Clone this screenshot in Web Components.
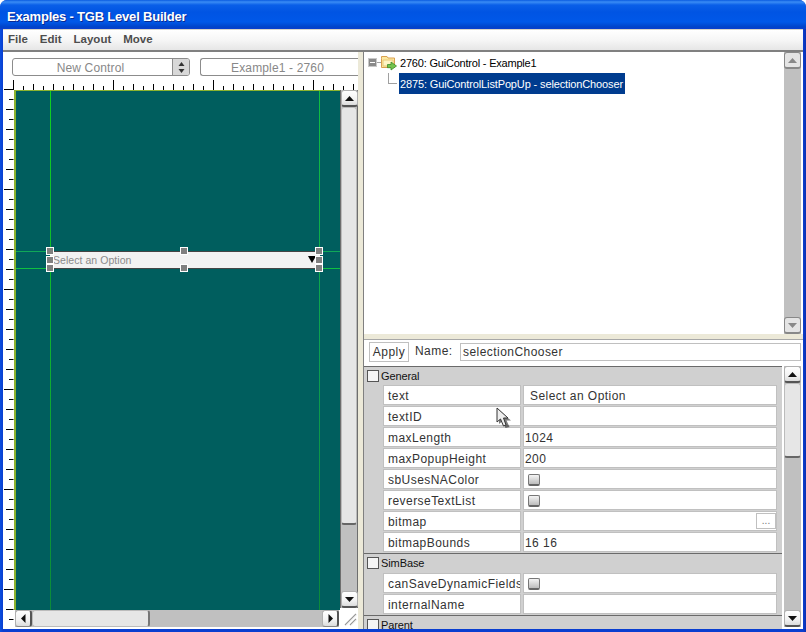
<!DOCTYPE html>
<html>
<head>
<meta charset="utf-8">
<title>Examples - TGB Level Builder</title>
<style>
  html, body { margin: 0; padding: 0; background: #fff; }
  body { font-family: "Liberation Sans", Arial, sans-serif; }
</style>
</head>
<body>
<level-builder>
  <title-bar slot="title">Examples - TGB Level Builder</title-bar>
  <menu-bar slot="menu"></menu-bar>
  <design-pane slot="left"></design-pane>
  <tree-pane slot="tree"></tree-pane>
  <props-pane slot="props"></props-pane>
</level-builder>

<script>
function define(name, html, setup) {
  const template = document.createElement('template')
  template.innerHTML = html
  customElements.define(name, class extends HTMLElement {
    constructor() {
      super()
      this.attachShadow({mode: 'open'}).appendChild(template.content.cloneNode(true))
      if (setup) setup(this.shadowRoot, this)
    }
  })
}

define('level-builder', `
<style>
  :host { display: flex; flex-direction: column; width: 806px; height: 632px; position: relative; overflow: hidden;
    border-radius: 7px 7px 0 0; background: linear-gradient(90deg, #0a4fe0, #0a3ed0 3px, #0a3ed0 803px, #0a2fb0); }
  .frame { flex: 1; min-height: 0; display: flex; flex-direction: column; margin: 0 3px 3px 3px; background: #ece9d8; }
  .split { flex: 1; min-height: 0; display: flex; border-top: 2px solid #808080; }
  .left { width: 355px; flex: none; display: flex; }
  .bar { width: 6px; flex: none; background: #ece9d8; border-right: 1px solid #808080; box-sizing: border-box; }
  .right { flex: 1; min-width: 0; display: flex; flex-direction: column; }
  .hbar { height: 6px; flex: none; background: #ece9d8; border-bottom: 1px solid #a8a8a8; box-sizing: border-box; }
  .cursor { position: absolute; left: 496px; top: 407px; }
</style>
<slot name="title"></slot>
<div class="frame">
  <slot name="menu"></slot>
  <div class="split">
    <div class="left"><slot name="left"></slot></div>
    <div class="bar"></div>
    <div class="right">
      <slot name="tree"></slot>
      <div class="hbar"></div>
      <slot name="props"></slot>
    </div>
  </div>
</div>
<svg class="cursor" width="18" height="24" viewBox="0 0 18 24">
  <path d="M3 3 L3 17 L6.5 14 L9.5 21 L13.5 20 L10.5 13.5 L15 13.5 Z" fill="#222" opacity=".6"/>
  <path d="M1 1 L1 15 L4.5 12 L7.5 19 L10 18 L7.5 11 L12 11 Z" fill="#eee" stroke="#333" stroke-width="1"/>
</svg>
`)

define('title-bar', `
<style>
  :host { display: flex; align-items: center; flex: none; height: 29px; box-sizing: border-box; padding: 3px 0 0 7px;
    background: linear-gradient(#0a5be0 0, #3a8cf5 2px, #0a5fe8 5px, #0054e3 12px, #0058e8 22px, #0043c8 27px, #0a3ed0 29px);
    color: #fff; font: bold 13px "Liberation Sans", Arial, sans-serif; letter-spacing: -.2px;
    text-shadow: 1px 1px 0 #0a2a90; white-space: nowrap; }
</style>
<slot></slot>
`)

define('menu-bar', `
<style>
  :host { display: flex; flex: none; align-items: center; height: 20px; gap: 12px; padding: 0 0 2px 5px; box-sizing: content-box;
    height: 18px; border-top: 1px solid #d8d5c8;
    background: linear-gradient(#ffffff, #f6f6f6 50%, #e6e6e6);
    color: #4d4d4d; font: bold 11.5px "Liberation Sans", Arial, sans-serif; }
  span:first-child { margin-right: -1.5px; }
</style>
<span>File</span><span>Edit</span><span>Layout</span><span>Move</span>
`)

define('scroll-btn', `
<style>
  :host { display: flex; align-items: center; justify-content: center; flex: none; width: 17px; height: 17px; box-sizing: border-box;
    background: linear-gradient(#ffffff, #f2f2f2 60%, #dcdcdc); border: 1px solid #b0b0b0; border-bottom: 2px solid #555; border-radius: 3px; }
  :host([disabled]) { background: #e4e4e4; border-color: #888; }
  :host([disabled]) path { fill: #888; }
  :host([dir-h]) { border: 1px solid #b0b0b0; border-right: 2px solid #555; border-bottom: 1px solid #888; }
  svg { display: block; }
</style>
<svg width="9" height="9" viewBox="0 0 9 9"><path fill="#111"/></svg>
`, (root, el) => {
  const shapes = {up: 'M4.5 2 L9 7 H0 Z', down: 'M0 2 H9 L4.5 7 Z', left: 'M6.5 0 V9 L2 4.5 Z', right: 'M2.5 0 L7 4.5 L2.5 9 Z'}
  root.querySelector('path').setAttribute('d', shapes[el.getAttribute('to')])
})

define('v-scroll', `
<style>
  :host { display: flex; flex-direction: column; flex: none; width: 17px; background: #c0c0c0; }
  .thumb { flex: none; box-sizing: border-box; background: #e6e6e6; border: 1px solid #bbb; border-bottom: 2px solid #666; border-radius: 3px; }
  .track { flex: 1; min-height: 0; }
</style>
<scroll-btn to="up"></scroll-btn>
<div class="thumb"></div>
<div class="track"></div>
<scroll-btn to="down"></scroll-btn>
`, (root, el) => {
  root.querySelector('.thumb').style.height = (el.getAttribute('thumb') || 0) + 'px'
  if (el.getAttribute('thumb') === '0') {
    root.querySelector('.thumb').style.display = 'none'
    root.querySelectorAll('scroll-btn').forEach(b => b.setAttribute('disabled', ''))
  }
})

define('combo-box', `
<style>
  :host { display: flex; box-sizing: border-box; height: 18px; border: 1px solid #8c8c8c; border-radius: 3px; background: #fff;
    color: #888; font: 12px "Liberation Sans", Arial, sans-serif; letter-spacing: .15px; }
  .label { flex: 1; text-align: center; line-height: 18px; white-space: nowrap; overflow: hidden; padding-right: 4px; }
  .btn { width: 16px; flex: none; background: #d8d8d8; border-left: 1px solid #8c8c8c; display: flex; align-items: center; justify-content: center; border-radius: 0 2px 2px 0; }
  :host([plain]) .btn { display: none; }
  :host([plain]) { border-right: none; border-radius: 3px 0 0 3px; }
</style>
<span class="label"><slot></slot></span>
<span class="btn"><svg width="7" height="11" viewBox="0 0 7 11"><path d="M3.5 0 L6.5 4 H.5 Z M.5 7 H6.5 L3.5 11 Z" fill="#333"/></svg></span>
`)

define('h-ruler', `
<style>
  :host { display: block; height: 10px; flex: none; background: #fff; }
  svg { display: block; }
</style>
<svg width="355" height="10"></svg>
`, (root) => {
  let d = ''
  for (let x = 10; x < 355; x += 10) {
    const big = (x - 10) % 100 === 0, mid = (x - 10) % 20 === 0
    const h = big ? 10 : mid ? 6 : 4
    d += `M${x + .5} ${10 - h}V10`
  }
  root.querySelector('svg').innerHTML = `<path d="${d}" stroke="#000"/>`
})

define('v-ruler', `
<style>
  :host { display: block; width: 11px; flex: none; margin-top: -1px; }
  svg { display: block; }
</style>
<svg width="11" height="540"></svg>
`, (root) => {
  let d = ''
  for (let y = 0; y < 540; y += 10) {
    const x0 = y % 100 === 0 ? 1 : y % 20 === 0 ? 3 : 6
    d += `M${x0} ${y + .5}H10.5`
  }
  root.querySelector('svg').innerHTML = `<path d="${d}" stroke="#000"/>`
})

define('design-canvas', `
<style>
  :host { display: block; flex: none; width: 326px; height: 520px; position: relative; box-sizing: border-box; overflow: hidden;
    background: #005e5e; border-left: 2px solid #8cb32e; border-top: 1px solid #8cb32e; }
  .g { position: absolute; }
  .v { top: 0; bottom: 0; width: 1px; }
  .h { left: 0; right: 0; height: 1px; }
  .v1 { left: 34px; background: linear-gradient(#10d020, #10b030 50%, #0c8a3a); }
  .v2 { left: 303px; background: linear-gradient(#10c040, #0ca050 50%, #0c8a3a); }
  .h1 { top: 160px; background: #10a858; }
  .h2 { top: 177px; background: #10c040; }
  .ctl { position: absolute; left: 34px; top: 160px; width: 270px; height: 18px; box-sizing: border-box;
    background: #f2f2f2; border-top: 1px solid #444; border-bottom: 1px solid #444; color: #8a8a8a;
    font: 10.5px "Liberation Sans", Arial, sans-serif; letter-spacing: .05px; line-height: 16px; padding-left: 3px; }
  .arrow { position: absolute; right: 4px; top: 4px; width: 8px; height: 7px; }
  .hd { position: absolute; width: 6px; height: 6px; background: #808080; outline: 1px solid #fff; }
</style>
<div class="g v v1"></div><div class="g v v2"></div>
<div class="g h h1"></div><div class="g h h2"></div>
<div class="ctl">Select an Option
  <svg class="arrow" viewBox="0 0 8 7"><path d="M0 0 H8 L4 7 Z" fill="#000"/></svg>
</div>
<i class="hd" style="left:31px;top:157px"></i><i class="hd" style="left:165px;top:157px"></i><i class="hd" style="left:300px;top:157px"></i>
<i class="hd" style="left:31px;top:166px"></i><i class="hd" style="left:300px;top:166px"></i>
<i class="hd" style="left:31px;top:174px"></i><i class="hd" style="left:165px;top:174px"></i><i class="hd" style="left:300px;top:174px"></i>
`)

define('h-scroll', `
<style>
  :host { display: flex; height: 17px; flex: none; background: #c0c0c0; }
  .thumb { width: 118px; box-sizing: border-box; background: #e6e6e6; border: 1px solid #bbb; border-right: 2px solid #777; border-radius: 3px; }
  .track { flex: 1; }
</style>
<scroll-btn to="left" dir-h></scroll-btn>
<div class="thumb"></div>
<div class="track"></div>
<scroll-btn to="right" dir-h></scroll-btn>
`)

define('design-pane', `
<style>
  :host { display: flex; flex-direction: column; width: 355px; background: #fff; overflow: hidden; }
  .tools { flex: none; display: flex; height: 28px; box-sizing: border-box; padding: 6px 0 0 9px; gap: 10px; background: #fff; }
  combo-box.a { width: 178px; }
  combo-box.b { flex: 1; }
  .body { flex: 1; min-height: 0; display: flex; }
  .col { flex: 1; display: flex; flex-direction: column; min-width: 0; }
  .row { display: flex; flex: none; }
  .grip { flex: 1; display: flex; align-items: flex-end; justify-content: flex-end; background: #fff; }
  .vs { display: flex; flex-direction: column; height: 520px; background: #fff; flex: none; width: 18px; box-sizing: border-box; }
  v-scroll { height: 518px; border-left: 1px solid #6e6e6e; border-right: 1px solid #6e6e6e; width: 16px; }
  h-scroll { width: 324px; margin-left: 1px; }
  .lower { display: flex; flex: none; }
</style>
<div class="tools">
  <combo-box class="a">New Control</combo-box>
  <combo-box class="b" plain>Example1 - 2760</combo-box>
</div>
<h-ruler></h-ruler>
<div class="body">
  <v-ruler></v-ruler>
  <div class="col">
    <div class="row">
      <design-canvas></design-canvas>
      <div class="vs"><v-scroll thumb="418"></v-scroll></div>
    </div>
    <div class="lower">
      <h-scroll></h-scroll>
      <div class="grip"><svg width="17" height="17" viewBox="0 0 17 17"><path d="M4 15 L15 4 M9 15 L15 9" stroke="#999" stroke-width="1.2"/><path d="M5 15.5 L15.5 5 M10 15.5 L15.5 10" stroke="#eee"/></svg></div>
    </div>
  </div>
</div>
`)

define('tree-pane', `
<style>
  :host { display: flex; flex: none; height: 282px; background: #fff; font: 11px "Liberation Sans", Arial, sans-serif; color: #000; letter-spacing: -.13px; }
  .list { flex: 1; min-width: 0; padding: 0 0 0 4px; display: flex; flex-direction: column; }
  .node { display: flex; align-items: center; height: 21px; white-space: nowrap; }
  .expander { width: 9px; height: 9px; flex: none; background: #8a8a8a; border: 1px solid #c8c8c8; box-sizing: border-box; display: flex; align-items: center; justify-content: center; }
  .expander i { width: 5px; height: 1px; background: #fff; display: block; }
  .dash { width: 4px; height: 1px; background: #a0a0a0; flex: none; }
  svg.folder { flex: none; margin-right: 3px; }
  .elbow { width: 9px; height: 11px; margin: 0 2px 0 20px; flex: none; border-left: 1px solid #a0a0a0; border-bottom: 1px solid #a0a0a0; box-sizing: border-box; align-self: flex-start; }
  .sel { background: #003c8f; color: #fff; height: 21px; line-height: 22px; padding: 0 2px 0 1px; }
  v-scroll { margin-right: 2px; }
</style>
<div class="list">
  <div class="node">
    <span class="expander"><i></i></span><span class="dash"></span>
    <svg class="folder" width="16" height="16" viewBox="0 0 16 16">
      <path d="M.5 3.5 V1.5 H6 L7 3 H13.5 V12.5 H.5 Z" fill="#fde9a0" stroke="#d9a050"/>
      <path d="M2 5 H12 V11 H2 Z" fill="#fff4c4" stroke="#e8c878"/>
      <path d="M6.5 9.5 H10 V7 L15.5 11 L10 15 V12.7 H6.5 Z" fill="#74c24e" stroke="#3b8a2a" stroke-width=".8"/>
    </svg>
    <span style="letter-spacing:-.2px">2760: GuiControl - Example1</span>
  </div>
  <div class="node">
    <span class="elbow"></span>
    <span class="sel">2875: GuiControlListPopUp - selectionChooser</span>
  </div>
</div>
<v-scroll thumb="0"></v-scroll>
`)

define('prop-row', `
<style>
  :host { display: grid; grid-template-columns: 138px 254px; gap: 2px; height: 20px; margin: 0 0 1px 19px; font: 12px "Liberation Sans", Arial, sans-serif; color: #333; letter-spacing: .45px; }
  .c { background: #fff; outline: 1px solid #c0c0c0; outline-offset: -1px; display: flex; align-items: center; height: 20px; box-sizing: border-box; padding: 1px 0 0 5px; overflow: hidden; white-space: nowrap; position: relative; }
  .val { padding-left: 2px; }
  .more { position: absolute; right: 1px; top: 2px; width: 20px; height: 16px; box-sizing: border-box; border: 1px solid #c0c0c0; text-align: center; color: #777; font-size: 10px; line-height: 13px; letter-spacing: 0; }
  .chk { width: 12px; height: 12px; box-sizing: border-box; margin-left: 3px; border: 1px solid #777; border-bottom: 2px solid #666; border-radius: 2px; background: linear-gradient(#f4f4f4, #bcbcbc); }
</style>
<div class="c"><slot name="k"></slot></div>
<div class="c val"><slot></slot></div>
`, (root, el) => {
  const val = root.querySelector('.val')
  if (el.hasAttribute('check')) val.innerHTML = '<span class="chk"></span>'
  if (el.hasAttribute('more')) val.insertAdjacentHTML('beforeend', '<span class="more">...</span>')
  if (el.hasAttribute('pad')) val.style.paddingLeft = el.getAttribute('pad') + 'px'
})

define('prop-section', `
<style>
  :host { display: block; flex: none; background: #d0d0d0; border-top: 1px solid #6a6a6a; }
  :host([tall]) .head { height: 18px; padding-bottom: 1px; }
  .head { display: flex; align-items: center; height: 17px; padding: 0 0 1px 3px; gap: 2px; font: 11px "Liberation Sans", Arial, sans-serif; color: #111; letter-spacing: -.1px; }
  .box { width: 12px; height: 12px; box-sizing: border-box; background: #f4f4f4; border: 1px solid #555; flex: none; }
</style>
<div class="head"><span class="box"></span><slot name="title"></slot></div>
<div class="rows"><slot></slot></div>
`)

define('props-pane', `
<style>
  :host { display: flex; flex-direction: column; flex: 1; min-height: 0; background: #fff; overflow: hidden; }
  .top { flex: none; height: 26px; display: flex; align-items: flex-start; padding: 2px 2px 0 5px; box-sizing: border-box; font: 12px "Liberation Sans", Arial, sans-serif; color: #333; letter-spacing: .45px; }
  .apply { width: 40px; height: 20px; box-sizing: border-box; border: 1px solid #c0c0c0; text-align: center; line-height: 19px; flex: none; }
  .name { margin: 0 0 0 6px; width: 45px; flex: none; line-height: 19px; }
  .input { flex: 1; height: 18px; margin-top: 1px; box-sizing: border-box; border: 1px solid #c0c0c0; line-height: 17px; padding-left: 2px; }
  .main { flex: 1; min-height: 0; display: flex; }
  .list { width: 418px; flex: none; display: flex; flex-direction: column; overflow: hidden; background: #fff; }
  .gap { width: 2px; flex: none; }
  v-scroll { margin-bottom: 2px; }
</style>
<div class="top">
  <span class="apply">Apply</span><span class="name">Name:</span><span class="input">selectionChooser</span>
</div>
<div class="main">
  <div class="list">
    <prop-section>
      <span slot="title">General</span>
      <prop-row pad="7"><span slot="k">text</span>Select an Option</prop-row>
      <prop-row><span slot="k">textID</span></prop-row>
      <prop-row><span slot="k">maxLength</span>1024</prop-row>
      <prop-row><span slot="k">maxPopupHeight</span>200</prop-row>
      <prop-row check><span slot="k">sbUsesNAColor</span></prop-row>
      <prop-row check><span slot="k">reverseTextList</span></prop-row>
      <prop-row more><span slot="k">bitmap</span></prop-row>
      <prop-row><span slot="k">bitmapBounds</span>16 16</prop-row>
    </prop-section>
    <prop-section tall>
      <span slot="title">SimBase</span>
      <prop-row check><span slot="k">canSaveDynamicFields</span></prop-row>
      <prop-row><span slot="k">internalName</span></prop-row>
    </prop-section>
    <prop-section tall>
      <span slot="title">Parent</span>
    </prop-section>
  </div>
  <div class="gap"></div>
  <v-scroll thumb="75"></v-scroll>
</div>
`)
</script>
</body>
</html>
